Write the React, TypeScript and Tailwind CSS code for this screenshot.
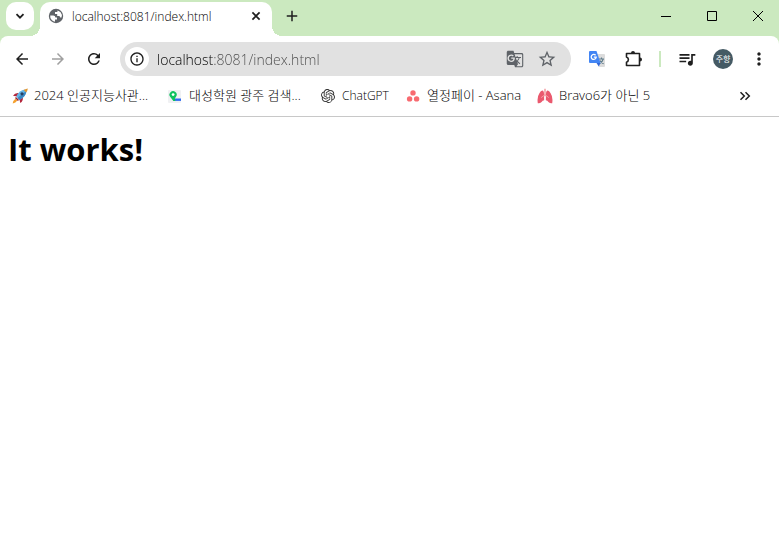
import React, { useState } from 'react';
import {
  MdAdd,
  MdArrowBack,
  MdArrowForward,
  MdGTranslate,
  MdInfoOutline,
  MdMoreVert,
  MdQueueMusic,
  MdRefresh,
  MdStarBorder,
} from 'react-icons/md';
import { SiOpenai } from 'react-icons/si';

// =============================================================================
// ICONS
// =============================================================================

const GlobeIcon = () => (
  <svg viewBox="0 0 16 16" className="size-4 shrink-0" aria-hidden="true">
    <circle cx="8" cy="8" r="7.2" fill="#5f6368" />
    <path
      d="M2.2 7.4 H5.2 Q7.4 7.4 7.4 9.6 H9 V11.6 H7 V13.7 A5.8 5.8 0 0 1 2.2 7.4 Z M9.4 2.4 V4 H7 V6 H9.2 V8 H11 Q12.2 8 12.2 9.6 H13.5 Q14.6 6.6 12.6 4.3 Q11.2 2.7 9.4 2.4 Z"
      fill="#fff"
    />
  </svg>
);

const TranslateColorIcon = () => (
  <svg viewBox="0 0 18 18" className="size-[18px]" aria-hidden="true">
    <path d="M7 4 H16 Q17 4 17 5 V16 Q17 17 16 17 H11 Z" fill="#dcdcdc" />
    <path d="M11 9 H16 M13.5 7.5 V9 M15.2 9 Q14.4 12.4 11.6 13.6 M12 10.4 Q13.2 12.6 15.6 13.8" stroke="#607d8b" strokeWidth="1.1" fill="none" />
    <path d="M2 1 H8.5 L12.5 13 H2 Q1 13 1 12 V2 Q1 1 2 1 Z" fill="#4285f4" />
    <path d="M8.5 13 H12.5 L10.8 16.6 Z" fill="#3367d6" />
    <path d="M7.6 5.3 A2.5 2.5 0 1 0 8.2 7.2 H5.8" stroke="#fff" strokeWidth="1.3" fill="none" />
  </svg>
);

const PuzzleIcon = () => (
  <svg viewBox="0 0 20 20" className="size-5" aria-hidden="true">
    <path
      d="M3.5 4.5 H16.5 V16.5 H3.5 V13.2 Q5.4 12.6 5.4 10.6 Q5.4 8.6 3.5 8 Z"
      fill="none"
      stroke="#1f1f1f"
      strokeWidth="1.6"
      strokeLinejoin="round"
    />
    <path d="M8 4 A2 2 0 0 1 12 4 Z M17 8.6 A2 2 0 0 1 17 12.6 Z" fill="#1f1f1f" />
  </svg>
);

const RocketIcon = () => (
  <svg viewBox="0 0 16 16" className="size-4 shrink-0" aria-hidden="true">
    <path d="M1 7.8 Q3 4.6 7 5.2 L5 8.6 Z M8.3 15 Q11.4 13 10.8 9 L7.4 11 Z" fill="#b3263c" />
    <path d="M4.3 8.6 Q7.2 2.2 13 1.6 L14.4 3 Q13.8 9 7.4 11.9 Z" fill="#64b5e6" />
    <path d="M5.5 9.9 Q9.2 6.5 14.4 3 Q13.8 9 7.4 11.9 Z" fill="#3b88c3" />
    <path d="M11.6 1.9 Q14.3 .5 15.8 .4 Q15.7 2.2 14.2 4.6 Z" fill="#e2952f" />
    <circle cx="10" cy="5.8" r="1.6" fill="#263f63" />
    <path d="M4 9 L7 12 L5.8 13 L3 10 Z" fill="#942236" />
    <path d="M3.5 10.8 L5.3 12.6 Q3.8 15 .7 15.4 Q1 12.5 3.5 10.8 Z" fill="#f5a12f" />
  </svg>
);

const PinRouteIcon = () => (
  <svg viewBox="0 0 16 16" className="size-4 shrink-0" aria-hidden="true">
    <rect x="1" y="2" width="13" height="13" rx="1" fill="#f0f1f3" />
    <path d="M6.5 11.7 H14" stroke="#2f6bf0" strokeWidth="2.4" />
    <path d="M6.4 12.9 L3.3 9 A3.6 3.6 0 1 1 9 8.8 L7.8 10.6 L8.4 12.9 Z" fill="#0ec25f" />
    <circle cx="6.1" cy="6.6" r="1.4" fill="#fff" />
  </svg>
);

const AsanaIcon = () => (
  <svg viewBox="0 0 16 16" className="size-4 shrink-0" fill="#f86a70" aria-hidden="true">
    <circle cx="8" cy="4.9" r="2.7" />
    <circle cx="4.6" cy="10.9" r="2.7" />
    <circle cx="11.6" cy="10.9" r="2.7" />
  </svg>
);

const LungsIcon = () => (
  <svg viewBox="0 0 16 16" className="size-4 shrink-0" aria-hidden="true">
    <path d="M8 .8 V6.5 L5.8 9 M8 6.5 L10.2 9" fill="none" stroke="#f4a3a8" strokeWidth="1.6" />
    <path d="M5.3 2.6 Q7 2.8 7 6 L7.2 12.2 Q5.4 12.4 4.6 14 Q2.5 15.8 .8 15.2 Q-.2 9 2.4 5.2 Q3.8 2.8 5.3 2.6 Z" fill="#ea596e" />
    <path d="M10.7 2.6 Q9 2.8 9 6 L8.8 12.2 Q10.6 12.4 11.4 14 Q13.5 15.8 15.2 15.2 Q16.2 9 13.6 5.2 Q12.2 2.8 10.7 2.6 Z" fill="#ea596e" />
    <path d="M7.6 7 L4.2 9.6 M8.4 7 L11.8 9.6" stroke="#f6a5ac" strokeWidth=".9" />
  </svg>
);

// =============================================================================
// DATA
// =============================================================================

const BOOKMARKS = [
  { label: '2024 인공지능사관...', icon: <RocketIcon />, style: 'w-[139px] text-[13px]' },
  { label: '대성학원 광주 검색...', icon: <PinRouteIcon />, style: 'w-[137px] text-[13px]' },
  { label: 'ChatGPT', icon: <SiOpenai className="mx-px size-3.5 shrink-0 text-[#333]" />, style: 'w-[69px] text-xs' },
  { label: '열정페이 - Asana', icon: <AsanaIcon />, style: 'w-[116px] text-[13px]' },
  { label: 'Bravo6가 아닌 5', icon: <LungsIcon />, style: 'w-[116px] text-[13px]' },
];

// =============================================================================
// BUTTONS
// =============================================================================

interface IconButtonProps {
  label: string;
  className?: string;
  children: React.ReactNode;
}

const IconButton: React.FC<IconButtonProps> = ({ label, className = 'text-[#1f1f1f]', children }) => (
  <button
    type="button"
    aria-label={label}
    className={`flex size-7 shrink-0 items-center justify-center rounded-full ${className}`}
  >
    {children}
  </button>
);

const WindowButton: React.FC<IconButtonProps> = ({ label, children }) => (
  <button type="button" aria-label={label} className="flex h-8 w-[42px] items-center justify-center">
    <svg viewBox="0 0 12 12" className="size-3" fill="none" stroke="#000" aria-hidden="true">
      {children}
    </svg>
  </button>
);

// =============================================================================
// TAB STRIP
// =============================================================================

const TabStrip = () => (
  <header className="flex h-9 items-start bg-[#cbe9bf] pl-1.5">
    <button
      type="button"
      aria-label="Search tabs"
      className="mt-0.5 flex size-7 shrink-0 items-center justify-center rounded-[10px] bg-white"
    >
      <svg viewBox="0 0 10 10" className="size-2.5" fill="none" stroke="#1f1f1f" strokeWidth="1.8" aria-hidden="true">
        <path d="M1.5 3.2 L5 6.7 L8.5 3.2" />
      </svg>
    </button>

    {/* Active tab, with the curved feet on both sides */}
    <div className="relative ml-1.5 mt-0.5 flex h-[34px] w-[232px] min-w-0 items-start rounded-t-[10px] bg-white pl-2 pr-1.5">
      <span className="absolute bottom-0 right-full size-2.5 bg-[radial-gradient(circle_at_top_left,transparent_10px,white_10px)]" />
      <span className="absolute bottom-0 left-full size-2.5 bg-[radial-gradient(circle_at_top_left,transparent_10px,white_10px)] -scale-x-100" />
      <div className="flex h-7 min-w-0 flex-1 items-center gap-2">
        <GlobeIcon />
        <span className="truncate pt-0.5 text-xs font-light text-black">localhost:8081/index.html</span>
      </div>
      <button type="button" aria-label="Close tab" className="flex h-7 w-5 shrink-0 items-center justify-center">
        <svg viewBox="0 0 10 10" className="size-2.5" stroke="#1f1f1f" strokeWidth="1.7" aria-hidden="true">
          <path d="M1.4 1.4 L8.6 8.6 M8.6 1.4 L1.4 8.6" />
        </svg>
      </button>
    </div>

    <div className="ml-1.5 mt-0.5">
      <IconButton label="New tab">
        <MdAdd className="size-[18px]" />
      </IconButton>
    </div>

    <div className="ml-auto flex shrink-0 gap-1">
      <WindowButton label="Minimize">
        <path d="M1 6.5 H11" />
      </WindowButton>
      <WindowButton label="Maximize">
        <path d="M1.5 1.5 H10.5 V10.5 H1.5 Z" />
      </WindowButton>
      <WindowButton label="Close">
        <path d="M1 1 L11 11 M11 1 L1 11" />
      </WindowButton>
    </div>
  </header>
);

// =============================================================================
// TOOLBAR
// =============================================================================

const Toolbar = () => {
  const [url, setUrl] = useState('localhost:8081/index.html');

  return (
    <div className="bg-[#cbe9bf]">
      <div className="flex h-[46px] items-center rounded-t-lg bg-white pl-2 pr-1.5">
        <div className="flex gap-2">
          <IconButton label="Back">
            <MdArrowBack className="size-[18px]" />
          </IconButton>
          <IconButton label="Forward" className="text-[#a0a0a0]">
            <MdArrowForward className="size-[18px]" />
          </IconButton>
          <IconButton label="Reload">
            <MdRefresh className="size-[18px]" />
          </IconButton>
        </div>

        <div className="mx-3 flex h-[34px] min-w-0 flex-1 items-center rounded-full bg-[#e1e1e1] pl-[5px] pr-2.5">
          <button
            type="button"
            aria-label="View site information"
            className="flex size-6 shrink-0 items-center justify-center rounded-full bg-white"
          >
            <MdInfoOutline className="size-4 text-[#1f1f1f]" />
          </button>
          {/* Host part is darker than the path */}
          <input
            type="text"
            aria-label="Address"
            value={url}
            onChange={e => setUrl(e.target.value)}
            className="ml-2 h-full min-w-0 flex-1 bg-[linear-gradient(to_right,#000_57px,#4a4a4a_57px)] bg-clip-text text-sm font-light text-transparent caret-black outline-none"
          />
          <div className="flex gap-1">
            <IconButton label="Translate this page" className="text-[#5f6368]">
              <MdGTranslate className="size-[18px]" />
            </IconButton>
            <IconButton label="Bookmark this tab" className="text-[#5f6368]">
              <MdStarBorder className="size-5" />
            </IconButton>
          </div>
        </div>

        <div className="flex items-center gap-2">
          <IconButton label="Google Translate">
            <TranslateColorIcon />
          </IconButton>
          <IconButton label="Extensions">
            <PuzzleIcon />
          </IconButton>
          <span className="mx-1 h-4 w-0.5 bg-[#cbe9bf]" />
          <IconButton label="Media controls">
            <MdQueueMusic className="size-5" />
          </IconButton>
          <IconButton label="Profile">
            <span className="flex size-5 items-center justify-center rounded-full bg-[#455a64] text-[8px] text-white">
              주향
            </span>
          </IconButton>
          <IconButton label="Menu">
            <MdMoreVert className="size-5" />
          </IconButton>
        </div>
      </div>
    </div>
  );
};

// =============================================================================
// BOOKMARKS BAR
// =============================================================================

const BookmarksBar = () => (
  <nav aria-label="Bookmarks" className="flex items-center border-b border-[#c8c8c8] pb-1.5 pl-3 pr-5">
    <div className="flex h-7 min-w-0 flex-1 items-center gap-4 overflow-hidden">
      {BOOKMARKS.map(item => (
        <a
          key={item.label}
          href="#"
          className={`flex shrink-0 items-center gap-1.5 whitespace-nowrap font-light text-black ${item.style}`}
        >
          {item.icon}
          {item.label}
        </a>
      ))}
    </div>
    <IconButton label="More bookmarks">
      <svg viewBox="0 0 12 12" className="size-3" fill="none" stroke="#1f1f1f" strokeWidth="1.5" aria-hidden="true">
        <path d="M1.5 2.2 L5.3 6 L1.5 9.8 M6.5 2.2 L10.3 6 L6.5 9.8" />
      </svg>
    </IconButton>
  </nav>
);

// =============================================================================
// APP
// =============================================================================

const App = () => (
  <div className="min-h-screen bg-white font-['Open_Sans','Noto_Sans_CJK_KR',sans-serif]">
    <TabStrip />
    <Toolbar />
    <BookmarksBar />
    <main className="px-2 py-3">
      <h1 className="text-[31px] leading-10 font-bold text-black">It works!</h1>
    </main>
  </div>
);

export default App;
